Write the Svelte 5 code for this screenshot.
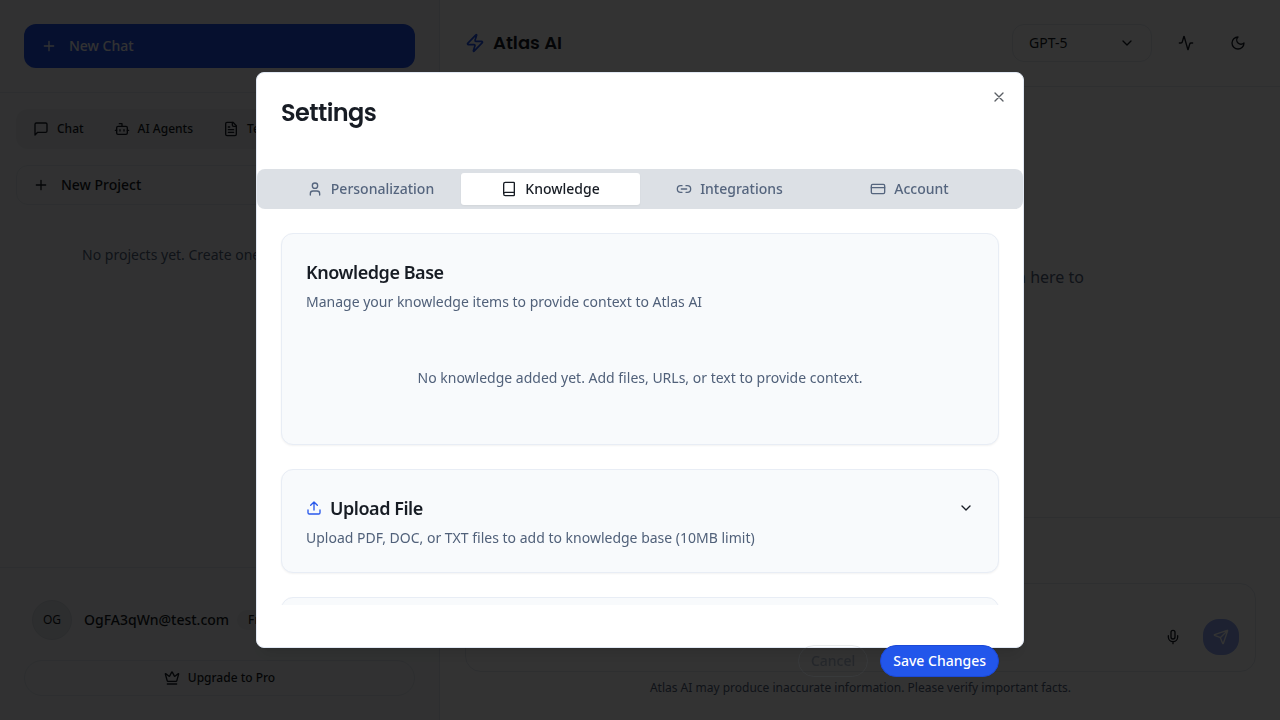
<script>
  const icons = {
    plus: '<path d="M5 12h14M12 5v14"/>',
    chat: '<path d="M21 15a2 2 0 0 1-2 2H7l-4 4V5a2 2 0 0 1 2-2h14a2 2 0 0 1 2 2z"/>',
    bot: '<path d="M12 8V4H8"/><rect width="16" height="12" x="4" y="8" rx="2"/><path d="M2 14h2M20 14h2M15 13v2M9 13v2"/>',
    file: '<path d="M15 2H6a2 2 0 0 0-2 2v16a2 2 0 0 0 2 2h12a2 2 0 0 0 2-2V7Z"/><path d="M14 2v4a2 2 0 0 0 2 2h4M10 9H8M16 13H8M16 17H8"/>',
    crown: '<path d="M11.562 3.266a.5.5 0 0 1 .876 0L15.39 8.87a1 1 0 0 0 1.516.294L21.183 5.5a.5.5 0 0 1 .798.519l-2.834 10.246a1 1 0 0 1-.956.734H5.81a1 1 0 0 1-.957-.734L2.02 6.02a.5.5 0 0 1 .798-.519l4.276 3.664a1 1 0 0 0 1.516-.294zM5 21h14"/>',
    zap: '<path d="M4 14a1 1 0 0 1-.78-1.63l9.9-10.2a.5.5 0 0 1 .86.46l-1.92 6.02A1 1 0 0 0 13 10h7a1 1 0 0 1 .78 1.63l-9.9 10.2a.5.5 0 0 1-.86-.46l1.92-6.02A1 1 0 0 0 11 14z"/>',
    down: '<path d="m6 9 6 6 6-6"/>',
    activity: '<path d="M22 12h-2.48a2 2 0 0 0-1.93 1.46l-2.35 8.36a.25.25 0 0 1-.48 0L9.24 2.18a.25.25 0 0 0-.48 0l-2.35 8.36A2 2 0 0 1 4.49 12H2"/>',
    moon: '<path d="M12 3a6 6 0 0 0 9 9 9 9 0 1 1-9-9Z"/>',
    mic: '<path d="M12 2a3 3 0 0 0-3 3v7a3 3 0 0 0 6 0V5a3 3 0 0 0-3-3Z"/><path d="M19 10v2a7 7 0 0 1-14 0v-2M12 19v3"/>',
    send: '<path d="M14.536 21.686a.5.5 0 0 0 .937-.024l6.5-19a.496.496 0 0 0-.635-.635l-19 6.5a.5.5 0 0 0-.024.937l7.93 3.18a2 2 0 0 1 1.112 1.11zM21.854 2.147l-10.94 10.939"/>',
    close: '<path d="M18 6 6 18M6 6l12 12"/>',
    user: '<path d="M19 21v-2a4 4 0 0 0-4-4H9a4 4 0 0 0-4 4v2"/><circle cx="12" cy="7" r="4"/>',
    book: '<path d="M4 19.5v-15A2.5 2.5 0 0 1 6.5 2H19a1 1 0 0 1 1 1v18a1 1 0 0 1-1 1H6.5a1 1 0 0 1 0-5H20"/>',
    link: '<path d="M9 17H7A5 5 0 0 1 7 7h2M15 7h2a5 5 0 1 1 0 10h-2M8 12h8"/>',
    card: '<rect width="20" height="14" x="2" y="5" rx="2"/><path d="M2 10h20"/>',
    upload: '<path d="M21 15v4a2 2 0 0 1-2 2H5a2 2 0 0 1-2-2v-4M17 8l-5-5-5 5M12 3v12"/>'
  };
  const tabs = [
    ['user', 'Personalization'],
    ['book', 'Knowledge'],
    ['link', 'Integrations'],
    ['card', 'Account']
  ];
  let active = $state('Knowledge');
</script>

{#snippet icon(name, size = 16)}
  <svg width={size} height={size} viewBox="0 0 24 24" fill="none" stroke="currentColor" stroke-width="2" stroke-linecap="round" stroke-linejoin="round" aria-hidden="true">{@html icons[name]}</svg>
{/snippet}

<div class="app">
  <aside>
    <div class="side-top"><button class="new-chat">{@render icon('plus')}New Chat</button></div>
    <div class="side-body">
      <div class="modes">
        <span>{@render icon('chat')}Chat</span>
        <span>{@render icon('bot')}AI Agents</span>
        <span>{@render icon('file')}Templates</span>
      </div>
      <button class="new-project">{@render icon('plus')}New Project</button>
      <p>No projects yet. Create one to get started.</p>
    </div>
    <div class="side-foot">
      <div class="account">
        <span class="avatar">OG</span><span class="mail">OgFA3qWn@test.com</span><span class="badge">Free</span>
      </div>
      <button class="upgrade">{@render icon('crown')}Upgrade to Pro</button>
    </div>
  </aside>
  <main>
    <header>
      <span class="zap">{@render icon('zap', 20)}</span>
      <h1>Atlas AI</h1>
      <div class="model">GPT-5{@render icon('down')}</div>
      <button class="tool" aria-label="Activity">{@render icon('activity')}</button>
      <button class="tool" aria-label="Dark mode">{@render icon('moon')}</button>
    </header>
    <section class="welcome"><p>Start a new chat or drop a file in here to</p></section>
    <footer>
      <div class="composer">
        <span class="mic">{@render icon('mic')}</span>
        <span class="send">{@render icon('send')}</span>
      </div>
      <p>Atlas AI may produce inaccurate information. Please verify important facts.</p>
    </footer>
  </main>
</div>

<div class="overlay">
  <div class="dialog" role="dialog" aria-modal="true" aria-label="Settings">
    <div class="dialog-head">
      <h2>Settings</h2>
      <button class="close" aria-label="Close">{@render icon('close')}</button>
    </div>
    <div class="tabs">
      {#each tabs as [glyph, label]}
        <button class:active={active === label} onclick={() => (active = label)}>{@render icon(glyph)}{label}</button>
      {/each}
    </div>
    <div class="panel">
      <section class="card base">
        <h3>Knowledge Base</h3>
        <p>Manage your knowledge items to provide context to Atlas AI</p>
        <p class="empty">No knowledge added yet. Add files, URLs, or text to provide context.</p>
      </section>
      <section class="card upload">
        <div class="row">
          <h3><span class="blue">{@render icon('upload')}</span>Upload File</h3>
          {@render icon('down')}
        </div>
        <p>Upload PDF, DOC, or TXT files to add to knowledge base (10MB limit)</p>
      </section>
      <section class="card"></section>
    </div>
    <div class="actions">
      <button class="cancel">Cancel</button>
      <button class="save">Save Changes</button>
    </div>
  </div>
</div>

<style>
  :global(body) { overflow: hidden; background: #fff; }
  * { box-sizing: border-box; }
  .app, .overlay { font-family: "Noto Sans", sans-serif; font-size: 14px; line-height: 20px; color: #171c24; }
  button { font: inherit; font-weight: 500; color: inherit; background: none; border: 0; padding: 0; margin: 0; display: flex; align-items: center; }
  p, h1, h2, h3 { margin: 0; }
  svg { flex: none; display: block; }

  .app { display: flex; width: 1280px; height: 720px; background: #fff; }
  aside { width: 440px; flex: none; background: #f4f6f9; border-right: 1px solid #dfe5ee; display: flex; flex-direction: column; }
  .side-top { padding: 24px; height: 93px; border-bottom: 1px solid #dfe5ee; }
  .new-chat { width: 391px; height: 44px; border-radius: 12px; background: #2050e8; color: #f8fafc; padding: 0 17px; gap: 12px; }
  .side-body { flex: 1; padding: 16px; }
  .modes { height: 40px; border-radius: 12px; background: #e9ebef; display: flex; align-items: center; padding-left: 17px; font-size: 12px; font-weight: 500; }
  .modes span { display: flex; align-items: center; gap: 8px; margin-right: 30px; }
  .new-project { width: 100%; height: 40px; margin-top: 16px; border: 1px solid #e1e6ed; border-radius: 12px; padding: 0 16px; gap: 12px; }
  .side-body p { text-align: center; padding-top: 40px; color: #51617a; }
  .side-foot { height: 153px; padding: 24px; border-top: 1px solid #dfe5ee; }
  .account { display: flex; align-items: center; padding: 8px; height: 56px; }
  .avatar { width: 40px; height: 40px; border-radius: 50%; background: #e1e4e9; border: 1px solid #d6dce4; font-size: 12px; display: grid; place-items: center; }
  .mail { margin: 0 8px 0 12px; font-weight: 500; }
  .badge { height: 20px; border-radius: 10px; padding: 0 11px; background: #e9ebef; font-size: 12px; font-weight: 500; }
  .upgrade { width: 391px; height: 36px; margin-top: 12px; border: 1px solid #dfe5ee; border-radius: 18px; justify-content: center; gap: 8px; font-size: 12px; }

  main { flex: 1; display: flex; flex-direction: column; }
  header { height: 87px; border-bottom: 1px solid #e3e8f0; display: flex; align-items: center; padding: 0 24px 0 25px; }
  .zap { color: #2050e8; margin-right: 8px; }
  h1 { font: 600 18px/28px Poppins, "Open Sans", sans-serif; flex: 1; }
  .model { width: 140px; height: 38px; border: 1px solid #e3e8f0; border-radius: 12px; display: flex; align-items: center; justify-content: space-between; padding: 0 16px; margin-right: 16px; }
  .tool { width: 36px; height: 36px; justify-content: center; }
  .tool + .tool { margin-left: 16px; }
  .welcome { flex: 1; display: flex; justify-content: flex-end; padding: 178px 196px 0 0; font-size: 16px; line-height: 24px; color: #51617a; }
  footer { height: 203px; border-top: 1px solid #e3e8f0; padding: 65px 24px 0 25px; }
  .composer { height: 89px; border: 1px solid #e3e8f0; border-radius: 16px; display: flex; justify-content: flex-end; align-items: flex-end; padding: 0 16px 16px; gap: 22px; }
  .mic { height: 36px; display: flex; align-items: center; }
  .send { width: 36px; height: 36px; border-radius: 16px; background: #8fa7f3; color: #fff; display: grid; place-items: center; }
  footer p { text-align: center; font-size: 12px; line-height: 16px; margin-top: 8px; color: #51617a; }

  .overlay { position: fixed; inset: 0; background: rgba(0, 0, 0, .8); display: flex; justify-content: center; align-items: flex-start; padding-top: 72px; }
  .dialog { width: 768px; height: 576px; border: 1px solid #e1e8f3; border-radius: 8px; background: #fff; box-shadow: 0 10px 15px -3px rgba(0,0,0,.1), 0 4px 6px -4px rgba(0,0,0,.1); display: flex; flex-direction: column; }
  .dialog-head { height: 96px; flex: none; padding: 24px 16px 0 24px; display: flex; justify-content: space-between; }
  h2 { font: 600 24px/32px Poppins, "Open Sans", sans-serif; letter-spacing: -.6px; }
  .close { width: 16px; height: 16px; margin-top: -8px; opacity: .7; }
  .tabs { height: 40px; flex: none; border-radius: 8px; padding: 4px 24px; background: #dce0e5; color: #55657e; display: grid; grid-template-columns: 180px 179px 179px 180px; }
  .tabs button { justify-content: center; gap: 8px; height: 32px; border-radius: 3px; }
  .tabs button:first-child { padding-right: 1px; }
  .tabs button:last-child { padding-left: 1px; }
  .tabs .active { background: #fff; color: #171c24; box-shadow: 0 1px 2px rgba(0,0,0,.05); }
  .panel { height: 396px; flex: none; padding: 24px 24px 0; overflow: hidden; }
  .card { height: 104px; padding: 24px; margin-bottom: 24px; border: 1px solid #e8edf5; border-radius: 12px; background: #f8fafc; box-shadow: 0 1px 2px rgba(0,0,0,.05); }
  .base { height: 212px; }
  h3 { font-size: 18px; line-height: 28px; font-weight: 600; letter-spacing: -.45px; display: flex; align-items: center; }
  .card p { color: #51617a; margin-top: 6px; }
  .card .empty { text-align: center; margin-top: 56px; }
  .row { display: flex; justify-content: space-between; align-items: center; }
  .blue { color: #2858eb; margin-right: 8px; }
  .actions { display: flex; justify-content: flex-end; gap: 12px; padding-right: 24px; margin-top: 40px; }
  .actions button { height: 32px; flex: none; border-radius: 16px; padding: 0 12px; border: 1px solid transparent; }
  .actions .cancel { opacity: .5; border-color: rgba(90, 100, 112, .28); color: #171c24; }
  .actions .save { background: #2256eb; border-color: #1b49d8; color: #fff; }
</style>
